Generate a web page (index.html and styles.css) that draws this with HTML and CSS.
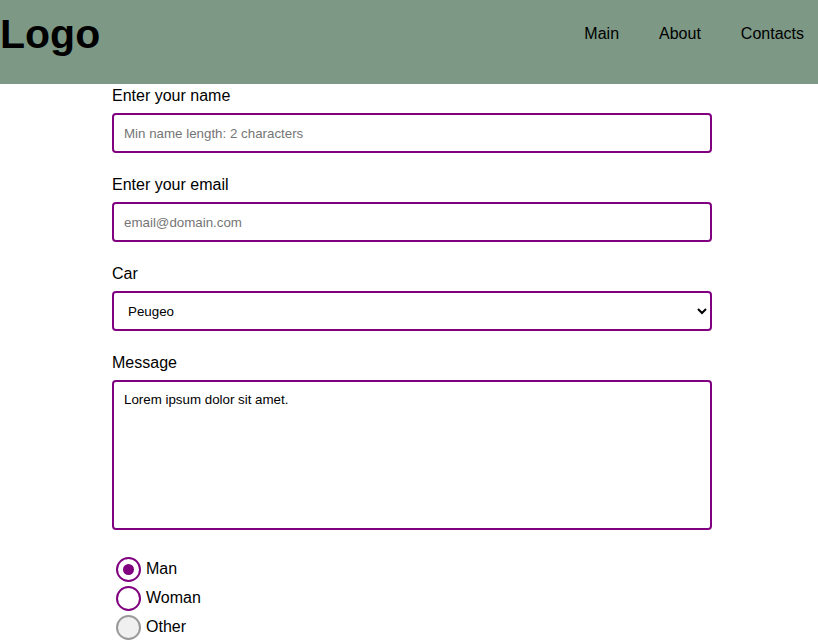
FILE: index.html
```html
<!DOCTYPE html>
<html lang="en">
<head>
<meta charset="utf-8">
<title>Contact form</title>
<link rel="stylesheet" href="styles.css">
</head>
<body>
<header class="header">
  <div class="logo">Logo</div>
  <nav class="nav">
    <a href="#main">Main</a>
    <a href="#about">About</a>
    <a href="#contacts">Contacts</a>
  </nav>
</header>
<form class="form">
  <div class="field">
    <label for="name">Enter your name</label>
    <input class="control" id="name" type="text" placeholder="Min name length: 2 characters">
  </div>
  <div class="field">
    <label for="email">Enter your email</label>
    <input class="control" id="email" type="email" placeholder="email@domain.com">
  </div>
  <div class="field">
    <label for="car">Car</label>
    <select class="control" id="car"><option>Peugeo</option></select>
  </div>
  <div class="field">
    <label for="message">Message</label>
    <textarea class="control message" id="message">Lorem ipsum dolor sit amet.</textarea>
  </div>
  <div class="options">
    <label class="option"><input class="radio" type="radio" name="gender" checked>Man</label>
    <label class="option"><input class="radio" type="radio" name="gender">Woman</label>
    <label class="option"><input class="radio" type="radio" name="gender" disabled>Other</label>
  </div>
</form>
</body>
</html>
```
FILE: styles.css
```css
* { box-sizing: border-box; }
body {
  margin: 0;
  background: #fff;
  color: #000;
  font: 16px/18px "Liberation Sans", Arial, sans-serif;
}
.header {
  display: flex;
  justify-content: space-between;
  align-items: flex-start;
  min-height: 84px;
  padding: 10px 14px 0 0;
  background: #7d9885;
}
.logo { font-size: 41px; line-height: 48px; font-weight: bold; }
.nav { display: flex; gap: 40px; padding-top: 15px; }
.nav a { color: inherit; text-decoration: none; }
.form {
  max-width: 606px;
  margin: 0 auto;
  padding: 3px 0 0 6px;
}
.field { margin-bottom: 23px; }
.field label { display: block; margin-bottom: 8px; }
.control {
  display: block;
  width: 100%;
  height: 40px;
  padding: 10px;
  border: 2px solid purple;
  border-radius: 4px;
  background: #fff;
  color: #000;
  font-family: "Liberation Sans", Arial, sans-serif;
}
.control::placeholder { color: #757575; }
.message { height: 150px; resize: none; }
.options { display: grid; gap: 4px; padding: 4px 4px 0; }
.option { display: flex; align-items: flex-start; gap: 5px; line-height: 23px; }
.radio {
  appearance: none;
  display: grid;
  place-content: center;
  width: 25px;
  height: 25px;
  margin: 0;
  border: 2px solid purple;
  border-radius: 50%;
  background: #fff;
}
.radio:checked::before {
  content: "";
  width: 11px;
  height: 11px;
  border-radius: 50%;
  background: purple;
}
.radio:disabled { border-color: #999; background: #f0f0f0; }
```
